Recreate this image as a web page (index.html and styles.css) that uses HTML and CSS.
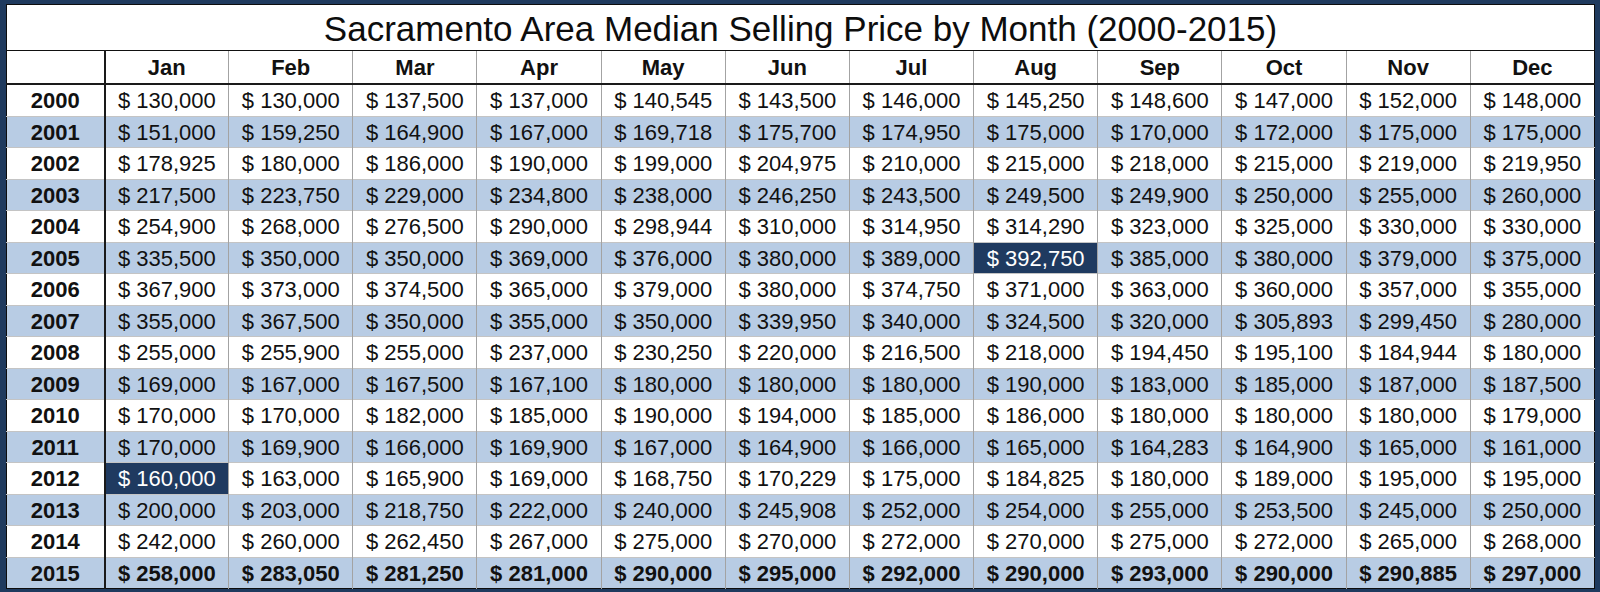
FILE: index.html
```html
<!DOCTYPE html>
<html>
<head>
<meta charset="utf-8">
<link rel="stylesheet" href="styles.css">
</head>
<body>
<div class="frame">
<table class="prices">
<colgroup><col class="c-year"><col span="12"></colgroup>
<tr class="title-row"><td colspan="13" class="title">Sacramento Area Median Selling Price by Month (2000-2015)</td></tr>
<tr class="head-row"><td class="year"></td><td>Jan</td><td>Feb</td><td>Mar</td><td>Apr</td><td>May</td><td>Jun</td><td>Jul</td><td>Aug</td><td>Sep</td><td>Oct</td><td>Nov</td><td>Dec</td></tr>
<tr class="row"><td class="year">2000</td><td>$ 130,000</td><td>$ 130,000</td><td>$ 137,500</td><td>$ 137,000</td><td>$ 140,545</td><td>$ 143,500</td><td>$ 146,000</td><td>$ 145,250</td><td>$ 148,600</td><td>$ 147,000</td><td>$ 152,000</td><td>$ 148,000</td></tr>
<tr class="row alt"><td class="year">2001</td><td>$ 151,000</td><td>$ 159,250</td><td>$ 164,900</td><td>$ 167,000</td><td>$ 169,718</td><td>$ 175,700</td><td>$ 174,950</td><td>$ 175,000</td><td>$ 170,000</td><td>$ 172,000</td><td>$ 175,000</td><td>$ 175,000</td></tr>
<tr class="row"><td class="year">2002</td><td>$ 178,925</td><td>$ 180,000</td><td>$ 186,000</td><td>$ 190,000</td><td>$ 199,000</td><td>$ 204,975</td><td>$ 210,000</td><td>$ 215,000</td><td>$ 218,000</td><td>$ 215,000</td><td>$ 219,000</td><td>$ 219,950</td></tr>
<tr class="row alt"><td class="year">2003</td><td>$ 217,500</td><td>$ 223,750</td><td>$ 229,000</td><td>$ 234,800</td><td>$ 238,000</td><td>$ 246,250</td><td>$ 243,500</td><td>$ 249,500</td><td>$ 249,900</td><td>$ 250,000</td><td>$ 255,000</td><td>$ 260,000</td></tr>
<tr class="row"><td class="year">2004</td><td>$ 254,900</td><td>$ 268,000</td><td>$ 276,500</td><td>$ 290,000</td><td>$ 298,944</td><td>$ 310,000</td><td>$ 314,950</td><td>$ 314,290</td><td>$ 323,000</td><td>$ 325,000</td><td>$ 330,000</td><td>$ 330,000</td></tr>
<tr class="row alt"><td class="year">2005</td><td>$ 335,500</td><td>$ 350,000</td><td>$ 350,000</td><td>$ 369,000</td><td>$ 376,000</td><td>$ 380,000</td><td>$ 389,000</td><td class="peak">$ 392,750</td><td>$ 385,000</td><td>$ 380,000</td><td>$ 379,000</td><td>$ 375,000</td></tr>
<tr class="row"><td class="year">2006</td><td>$ 367,900</td><td>$ 373,000</td><td>$ 374,500</td><td>$ 365,000</td><td>$ 379,000</td><td>$ 380,000</td><td>$ 374,750</td><td>$ 371,000</td><td>$ 363,000</td><td>$ 360,000</td><td>$ 357,000</td><td>$ 355,000</td></tr>
<tr class="row alt"><td class="year">2007</td><td>$ 355,000</td><td>$ 367,500</td><td>$ 350,000</td><td>$ 355,000</td><td>$ 350,000</td><td>$ 339,950</td><td>$ 340,000</td><td>$ 324,500</td><td>$ 320,000</td><td>$ 305,893</td><td>$ 299,450</td><td>$ 280,000</td></tr>
<tr class="row"><td class="year">2008</td><td>$ 255,000</td><td>$ 255,900</td><td>$ 255,000</td><td>$ 237,000</td><td>$ 230,250</td><td>$ 220,000</td><td>$ 216,500</td><td>$ 218,000</td><td>$ 194,450</td><td>$ 195,100</td><td>$ 184,944</td><td>$ 180,000</td></tr>
<tr class="row alt"><td class="year">2009</td><td>$ 169,000</td><td>$ 167,000</td><td>$ 167,500</td><td>$ 167,100</td><td>$ 180,000</td><td>$ 180,000</td><td>$ 180,000</td><td>$ 190,000</td><td>$ 183,000</td><td>$ 185,000</td><td>$ 187,000</td><td>$ 187,500</td></tr>
<tr class="row"><td class="year">2010</td><td>$ 170,000</td><td>$ 170,000</td><td>$ 182,000</td><td>$ 185,000</td><td>$ 190,000</td><td>$ 194,000</td><td>$ 185,000</td><td>$ 186,000</td><td>$ 180,000</td><td>$ 180,000</td><td>$ 180,000</td><td>$ 179,000</td></tr>
<tr class="row alt"><td class="year">2011</td><td>$ 170,000</td><td>$ 169,900</td><td>$ 166,000</td><td>$ 169,900</td><td>$ 167,000</td><td>$ 164,900</td><td>$ 166,000</td><td>$ 165,000</td><td>$ 164,283</td><td>$ 164,900</td><td>$ 165,000</td><td>$ 161,000</td></tr>
<tr class="row"><td class="year">2012</td><td class="peak">$ 160,000</td><td>$ 163,000</td><td>$ 165,900</td><td>$ 169,000</td><td>$ 168,750</td><td>$ 170,229</td><td>$ 175,000</td><td>$ 184,825</td><td>$ 180,000</td><td>$ 189,000</td><td>$ 195,000</td><td>$ 195,000</td></tr>
<tr class="row alt"><td class="year">2013</td><td>$ 200,000</td><td>$ 203,000</td><td>$ 218,750</td><td>$ 222,000</td><td>$ 240,000</td><td>$ 245,908</td><td>$ 252,000</td><td>$ 254,000</td><td>$ 255,000</td><td>$ 253,500</td><td>$ 245,000</td><td>$ 250,000</td></tr>
<tr class="row"><td class="year">2014</td><td>$ 242,000</td><td>$ 260,000</td><td>$ 262,450</td><td>$ 267,000</td><td>$ 275,000</td><td>$ 270,000</td><td>$ 272,000</td><td>$ 270,000</td><td>$ 275,000</td><td>$ 272,000</td><td>$ 265,000</td><td>$ 268,000</td></tr>
<tr class="row alt last"><td class="year">2015</td><td>$ 258,000</td><td>$ 283,050</td><td>$ 281,250</td><td>$ 281,000</td><td>$ 290,000</td><td>$ 295,000</td><td>$ 292,000</td><td>$ 290,000</td><td>$ 293,000</td><td>$ 290,000</td><td>$ 290,885</td><td>$ 297,000</td></tr>
</table>
</div>
</body>
</html>
```
FILE: styles.css
```css
html, body {
  margin: 0;
  padding: 0;
}
body {
  background: #1f3a5e;
  font-family: "Liberation Sans", Arial, sans-serif;
  color: #111;
  width: 1600px;
  height: 592px;
  overflow: hidden;
}
.frame {
  padding: 4px 0 0 6px;
}
.prices {
  border-collapse: collapse;
  table-layout: fixed;
  width: 1589px;
  background: #fff;
  border: 1px solid #0d0d0d;
}
.c-year {
  width: 98px;
}
.prices td {
  padding: 0;
  text-align: center;
  vertical-align: middle;
  font-size: 22px;
  line-height: 24px;
  white-space: nowrap;
  border-left: 1px solid #a3a3a3;
  border-top: 1px solid #c4c4c4;
  overflow: hidden;
}
.prices td.year {
  font-weight: bold;
  border-left: none;
  border-right: 2px solid #1a1a1a;
}
.title-row td.title {
  height: 42px;
  font-size: 35px;
  line-height: 40px;
  padding-top: 3px;
  border: none;
  border-bottom: 1px solid #111;
  color: #0d0d0d;
}
.head-row td {
  height: 30px;
  font-weight: bold;
  border-top: none;
  border-bottom: 2px solid #1a1a1a;
  padding-top: 2px;
}
.row td {
  height: 28.5px;
  padding-top: 2px;
}
.row.alt td {
  background: #b8cce4;
}
.row.last td {
  font-weight: bold;
}
.prices td.peak,
.row.alt td.peak {
  background: #1f3a60;
  color: #fff;
}
```
